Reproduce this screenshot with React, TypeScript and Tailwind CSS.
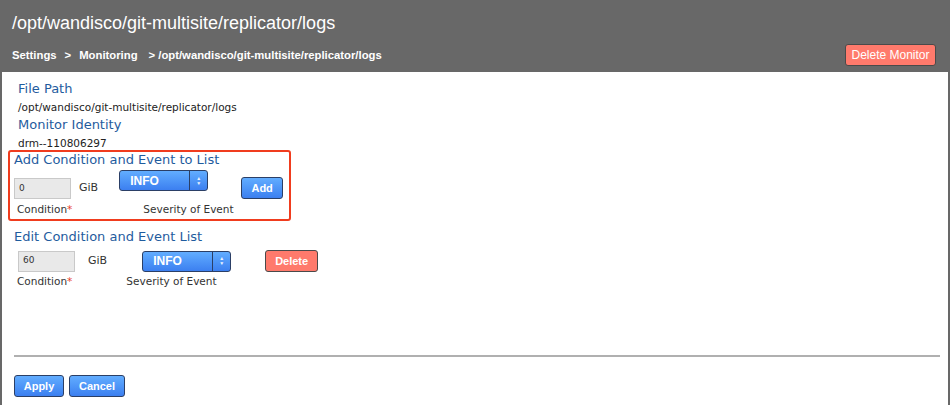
import React from 'react'

const blueBtn =
  'rounded-[3px] border border-[#2b3f66] bg-gradient-to-b from-[#62adff] to-[#3c7ff0] text-white font-bold text-[11px] [font-family:"Liberation_Sans",Arial,sans-serif]'
const redBtn =
  'rounded-[3px] border border-[#4a4a4a] bg-[#ff7a6c] text-white font-bold text-[11px] [font-family:"Liberation_Sans",Arial,sans-serif]'

const SeveritySelect = () => (
  <div className={`flex h-[21px] w-[89px] items-stretch ${blueBtn} text-[12px]`}>
    <span className="flex flex-1 items-center pl-[10px]">INFO</span>
    <span className="flex w-[18px] flex-col items-center justify-center border-l border-[#2b3f66] text-[5px] leading-[5px] text-white/90">
      <span>▲</span>
      <span>▼</span>
    </span>
  </div>
)

const ConditionInput = ({ value }: { value: string }) => (
  <div className="flex h-[21px] w-[57px] items-center border border-[#c9c9c9] bg-[#e9e9e9] pl-[4px] text-[9px] text-[#333]">
    {value}
  </div>
)

export default function App() {
  return (
    <div className='flex h-[405px] w-[950px] flex-col overflow-hidden border-x-2 border-[#686868] bg-white [font-family:"DejaVu_Sans",Verdana,sans-serif]'>
      <div className='flex h-[72px] flex-col bg-[#686868] px-[10px] pt-[12px] text-white [font-family:"Liberation_Sans",Arial,sans-serif]'>
        <div className="text-[18px] leading-[22px]">/opt/wandisco/git-multisite/replicator/logs</div>
        <div className="mt-[10px] flex items-center justify-between">
          <div className="flex gap-[8px] text-[11.3px] font-bold">
            <span>Settings</span>
            <span>&gt;</span>
            <span className="mr-[3px]">Monitoring</span>
            <span>&gt; /opt/wandisco/git-multisite/replicator/logs</span>
          </div>
          <button type="button" className={`mr-[2px] h-[22px] w-[91px] ${redBtn} text-[12px] font-normal`}>
            Delete Monitor
          </button>
        </div>
      </div>

      <div className="flex flex-1 flex-col pt-[8px]">
        <div className="pl-[16px]">
          <div className="text-[13px] leading-[18px] text-[#1f5c9e]">File Path</div>
          <div className="text-[10.5px] leading-[18px] text-[#222]">/opt/wandisco/git-multisite/replicator/logs</div>
          <div className="text-[13px] leading-[18px] text-[#1f5c9e]">Monitor Identity</div>
          <div className="text-[10.5px] leading-[18px] text-[#222]">drm--110806297</div>
        </div>

        <div className="ml-[6px] mt-[-2px] h-[71px] w-[283px] rounded-[3px] border-2 border-[#f03c1e] pl-[4px]">
          <div className="text-[13px] leading-[16px] text-[#1f5c9e]">Add Condition and Event to List</div>
          <div className="mt-[2px] flex items-start">
            <div className="mt-[8px]">
              <ConditionInput value="0" />
            </div>
            <span className="ml-[8px] mt-[10px] text-[11px] text-[#333]">GiB</span>
            <div className="ml-[21px]">
              <SeveritySelect />
            </div>
            <button type="button" className={`ml-[33px] mt-[7px] h-[22px] w-[42px] ${blueBtn}`}>
              Add
            </button>
          </div>
          <div className="mt-[3px] flex text-[10.5px] text-[#333]">
            <span className="ml-[3px]">
              Condition<span className="text-[#e8412b]">*</span>
            </span>
            <span className="ml-[71px]">Severity of Event</span>
          </div>
        </div>

        <div className="mt-[7px] pl-[12px]">
          <div className="text-[13px] leading-[18px] text-[#1f5c9e]">Edit Condition and Event List</div>
          <div className="mt-[4px] flex items-center pl-[4px]">
            <ConditionInput value="60" />
            <span className="ml-[13px] text-[11px] text-[#333]">GiB</span>
            <div className="ml-[35px]">
              <SeveritySelect />
            </div>
            <button type="button" className={`ml-[34px] h-[22px] w-[53px] ${redBtn}`}>
              Delete
            </button>
          </div>
          <div className="mt-[2px] flex text-[10.5px] text-[#333]">
            <span className="ml-[3px]">
              Condition<span className="text-[#e8412b]">*</span>
            </span>
            <span className="ml-[54px]">Severity of Event</span>
          </div>
        </div>

        <div className="mb-[18px] ml-[12px] mr-[8px] mt-auto border-t-2 border-[#b0b0b0]" />
        <div className="mb-[8px] flex gap-[5px] pl-[12px]">
          <button type="button" className={`h-[22px] w-[50px] ${blueBtn}`}>
            Apply
          </button>
          <button type="button" className={`h-[22px] w-[56px] ${blueBtn}`}>
            Cancel
          </button>
        </div>
      </div>
    </div>
  )
}
